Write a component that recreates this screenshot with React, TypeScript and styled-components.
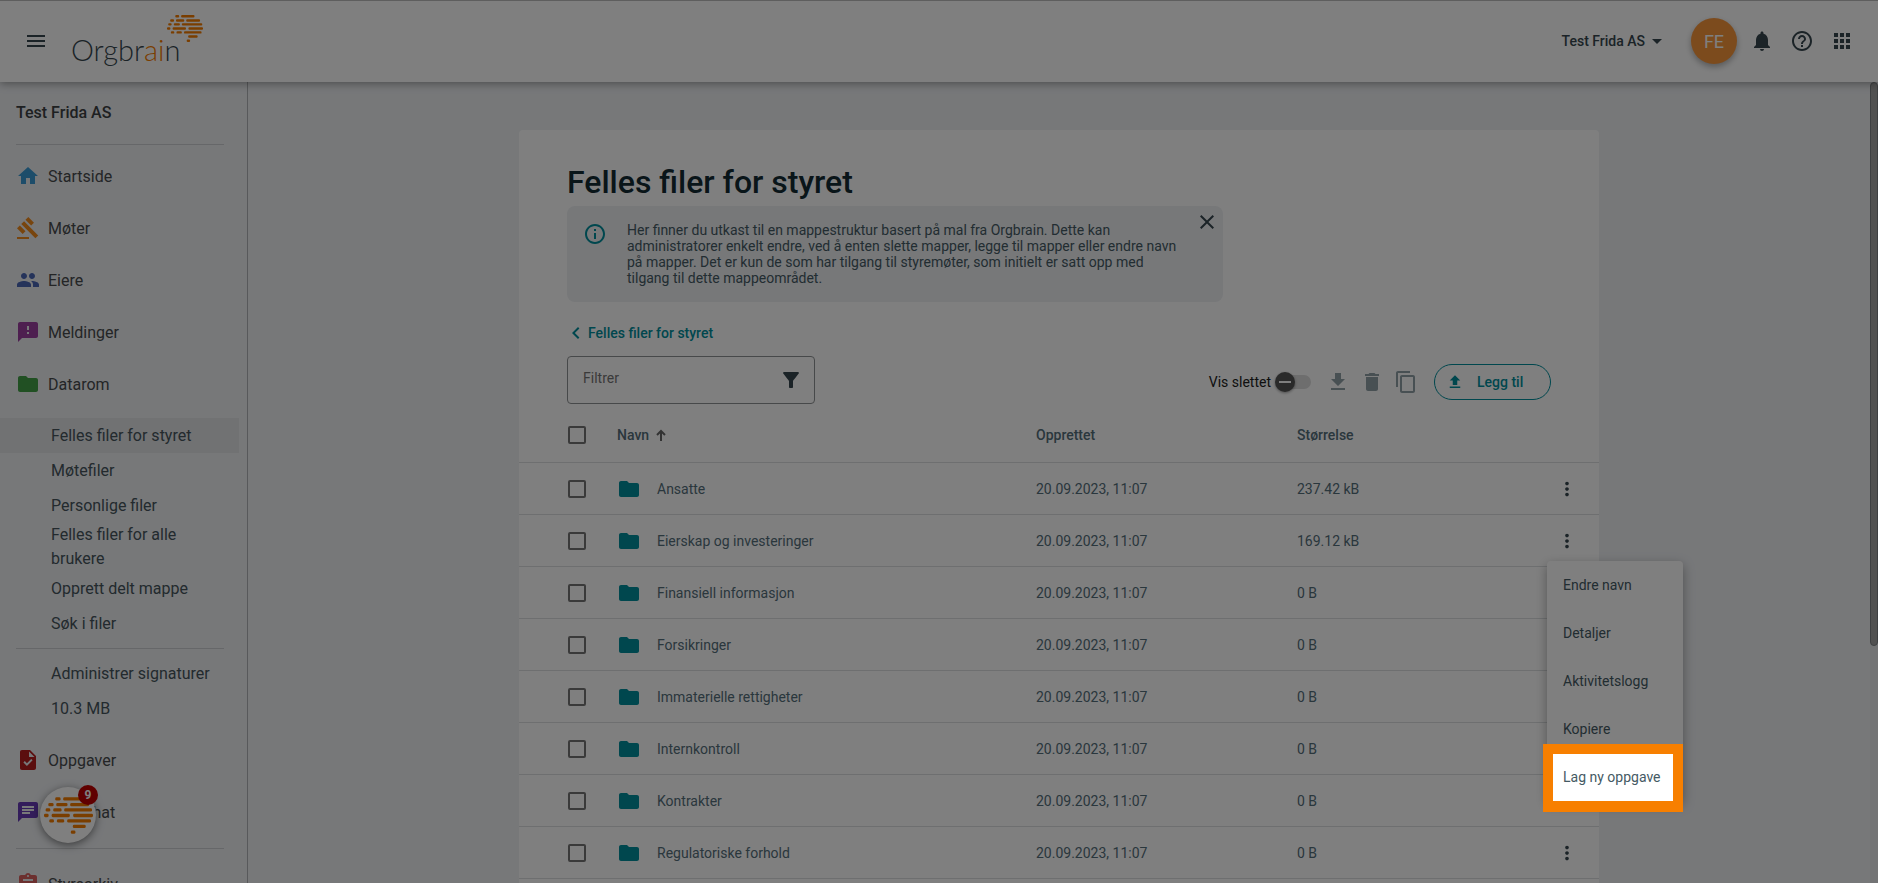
import React from "react";
import styled, { createGlobalStyle } from "styled-components";
import {
  MdMenu, MdHome, MdGavel, MdPeople, MdFeedback, MdFolder, MdTask, MdChat, MdAssignment,
  MdArrowDropDown, MdNotifications, MdHelpOutline, MdApps, MdInfoOutline, MdClose,
  MdChevronLeft, MdFilterAlt, MdFileDownload, MdDelete, MdContentCopy, MdFileUpload,
  MdMoreVert,
} from "react-icons/md";

const teal = "#008e9c";
const slate = "#546e7a";
const ink = "#37474f";
const panel = "#eef0f3";

const GlobalStyle = createGlobalStyle`
  * { box-sizing: border-box; }
  body {
    margin: 0;
    overflow: hidden;
    font-family: Roboto, "Liberation Sans", sans-serif;
    font-size: 14px;
    color: ${slate};
    background: ${panel};
  }
  button, input { font: inherit; color: inherit; }
  a { color: inherit; text-decoration: none; }
  svg { display: block; flex: none; }
`;

const Page = styled.div`
  display: flex;
  flex-direction: column;
  height: 100vh;
`;

const TopBar = styled.header`
  position: relative;
  z-index: 1;
  flex: none;
  display: flex;
  align-items: center;
  height: 82px;
  padding: 0 24px 1px;
  border-top: 1px solid #bdbdbd;
  background: #fff;
  box-shadow: 0 2px 8px rgba(0, 0, 0, 0.35);
`;

const IconButton = styled.button<{ $tone?: string }>`
  display: flex;
  align-items: center;
  justify-content: center;
  padding: 0;
  border: 0;
  background: none;
  color: ${(p) => p.$tone ?? ink};
  cursor: pointer;
`;

const Logo = styled.a`
  position: relative;
  margin-left: 23px;
  width: 132px;
  height: 56px;
  padding-top: 20px;
  font-family: Lato, sans-serif;
  font-weight: 300;
  font-size: 29px;
  line-height: 34px;
  color: #37474f;
`;

const LogoAccent = styled.span`
  color: #f57c00;
`;

const LogoMark = styled.span`
  position: absolute;
  top: 2px;
  right: 0;
`;

const TopActions = styled.div`
  display: flex;
  align-items: center;
  gap: 16px;
  margin-left: auto;
`;

const OrgButton = styled.button`
  display: flex;
  align-items: center;
  margin-right: 6px;
  padding: 0;
  border: 0;
  background: none;
  color: ${ink};
  font-weight: 500;
`;

const Avatar = styled.button`
  width: 46px;
  height: 46px;
  margin-right: -3px;
  padding: 0;
  border: 0;
  border-radius: 50%;
  background: #f9963b;
  color: #fff;
  font-size: 18px;
  box-shadow: 0 3px 6px rgba(0, 0, 0, 0.3);
`;

const Body = styled.div`
  flex: 1;
  display: grid;
  grid-template-columns: 248px 1fr 8px;
  min-height: 0;
`;

const SideBar = styled.nav`
  border-right: 1px solid #b0b3b6;
  padding-right: 8px;
`;

const OrgName = styled.h2`
  margin: 0;
  padding: 19px 16px;
  height: 62px;
  font-size: 16px;
  font-weight: 500;
  line-height: 24px;
  color: #3c4043;
`;

const Rule = styled.hr<{ $above?: number; $below?: number }>`
  height: 1px;
  margin: ${(p) => p.$above ?? 0}px 15px ${(p) => p.$below ?? 0}px 16px;
  border: 0;
  background: #cdcfd2;
`;

const NavItem = styled.a<{ $tone: string }>`
  display: flex;
  align-items: center;
  gap: 8px;
  height: 52px;
  padding-left: 16px;
  font-size: 16px;
  color: #484b4d;
  svg { color: ${(p) => p.$tone}; }
`;

const SubList = styled.div`
  display: flex;
  flex-direction: column;
  padding-top: 8px;
`;

const SubItem = styled.a<{ $active?: boolean }>`
  display: flex;
  align-items: center;
  min-height: 35px;
  padding: 0 16px 0 51px;
  font-size: 16px;
  line-height: 24px;
  color: #46555c;
  background: ${(p) => (p.$active ? "#e2e4e7" : "none")};
`;

const StorageUsed = styled(SubItem)`
  margin-bottom: 8px;
`;

const Main = styled.main`
  display: flex;
  justify-content: center;
  align-items: flex-start;
  padding: 48px 24px 0;
`;

const Card = styled.section`
  width: 100%;
  max-width: 1080px;
  padding-bottom: 48px;
  border-radius: 4px;
  background: #fff;
`;

const CardTop = styled.div`
  padding: 32px 48px 0;
`;

const Title = styled.h1`
  margin: 0;
  font-size: 32px;
  font-weight: 500;
  line-height: 40px;
  color: #122a33;
`;

const Notice = styled.div`
  display: flex;
  align-items: flex-start;
  max-width: 656px;
  margin-top: 4px;
  padding: 16px;
  border-radius: 8px;
  background: ${panel};
`;

const NoticeText = styled.p`
  flex: 1;
  margin: 0 12px 0 20px;
  line-height: 16px;
  color: #455a64;
`;

const NoticeClose = styled(IconButton)`
  margin: -12px -12px 0 0;
`;

const Crumb = styled.a`
  display: flex;
  align-items: center;
  height: 20px;
  margin: 21px 0 13px -3px;
  font-weight: 500;
  color: ${teal};
`;

const Toolbar = styled.div`
  display: flex;
  align-items: center;
  justify-content: space-between;
`;

const FilterBox = styled.label`
  display: flex;
  align-items: center;
  width: 248px;
  height: 48px;
  padding: 0 11px 0 15px;
  border: 1px solid #8e9294;
  border-radius: 4px;
  color: ${ink};
`;

const FilterInput = styled.input`
  flex: 1;
  min-width: 0;
  padding: 0 0 4px;
  border: 0;
  outline: 0;
  background: none;
  &::placeholder { color: #757575; opacity: 1; }
`;

const Tools = styled.div`
  display: flex;
  align-items: center;
  gap: 10px;
  padding-top: 4px;
`;

const SwitchLabel = styled.label`
  display: flex;
  align-items: center;
  gap: 4px;
  margin-right: 5px;
  color: #212121;
`;

const Switch = styled.input`
  appearance: none;
  position: relative;
  width: 36px;
  height: 20px;
  margin: 0;
  &::before {
    content: "";
    position: absolute;
    inset: 3px 0 3px 4px;
    border-radius: 7px;
    background: #dcdcdc;
  }
  &::after {
    content: "";
    position: absolute;
    inset: 0 auto 0 0;
    width: 20px;
    border-radius: 50%;
    background: linear-gradient(#fff, #fff) center / 12px 2px no-repeat #555;
    box-shadow: 0 1px 3px rgba(0, 0, 0, 0.4);
  }
`;

const AddButton = styled.button`
  display: flex;
  align-items: center;
  gap: 13px;
  width: 117px;
  height: 36px;
  margin-left: 6px;
  padding: 0 11px;
  border: 1px solid ${teal};
  border-radius: 18px;
  background: none;
  color: ${teal};
  font-weight: 500;
`;

const Files = styled.table`
  width: 100%;
  border-collapse: separate;
  border-spacing: 0;
  table-layout: fixed;
`;

const HeadCell = styled.th<{ $width?: number; $first?: boolean }>`
  width: ${(p) => (p.$width ? `${p.$width}px` : "auto")};
  height: 59px;
  padding: 4px 0 0 ${(p) => (p.$first ? 49 : 0)}px;
  border-bottom: 1px solid #dcdfe1;
  text-align: left;
  font-weight: 500;
`;

const Cell = styled.td<{ $first?: boolean }>`
  height: 52px;
  padding: 0 0 0 ${(p) => (p.$first ? 49 : 0)}px;
  border-bottom: 1px solid #dcdfe1;
`;

const MenuCell = styled(Cell)`
  position: relative;
  padding-left: 9px;
`;

const SortLabel = styled.span`
  display: flex;
  align-items: center;
  gap: 7px;
`;

const NameLabel = styled.a`
  display: flex;
  align-items: center;
  gap: 16px;
  svg { color: ${teal}; }
`;

const Check = styled.input`
  appearance: none;
  display: block;
  width: 18px;
  height: 18px;
  margin: 0;
  border: 2px solid #757575;
  border-radius: 2px;
`;

const Menu = styled.div`
  position: absolute;
  z-index: 10;
  top: 46px;
  left: 0;
  width: 136px;
  border-radius: 4px;
  background: #fff;
  box-shadow: 0 4px 12px rgba(0, 0, 0, 0.35);
`;

const MenuItem = styled.button`
  position: relative;
  display: flex;
  align-items: center;
  width: 100%;
  height: 48px;
  padding: 0 16px;
  border: 0;
  background: none;
  color: #455a64;
  white-space: nowrap;
`;

/* Frames one item and dims everything outside the frame. */
const Spotlight = styled.span`
  position: absolute;
  inset: -9px 0 -11px -4px;
  border: solid #f77f00;
  border-width: 10px 10px 11px;
  box-shadow: 0 0 0 300vmax rgba(0, 0, 0, 0.5);
  pointer-events: none;
`;

const ScrollTrack = styled.div`
  background: #e6e8eb;
`;

const ScrollThumb = styled.div`
  height: 564px;
  max-height: 71%;
  border: 1px solid #7d8184;
  border-radius: 5px;
  background: #a3a3a3;
`;

const HelpBubble = styled.button`
  position: fixed;
  z-index: 2;
  left: 40px;
  bottom: 40px;
  display: flex;
  align-items: center;
  justify-content: center;
  width: 56px;
  height: 56px;
  padding: 0;
  border: 0;
  border-radius: 50%;
  background: #fff;
  box-shadow: 0 2px 8px rgba(0, 0, 0, 0.5);
`;

const Badge = styled.span`
  position: absolute;
  top: -2px;
  right: -2px;
  width: 20px;
  height: 20px;
  border-radius: 50%;
  background: #c00000;
  color: #fff;
  font-size: 12px;
  font-weight: 700;
  line-height: 20px;
`;

const dashes: [number, number, number][] = [
  [164, 180, 325], [188, 243, 325],
  [143, 159, 342], [167, 201, 342], [209, 266, 342],
  [135, 149, 358], [158, 183, 358], [191, 275, 358],
  [130, 144, 375], [153, 208, 375], [218, 278, 375],
  [146, 160, 391], [169, 191, 391], [200, 272, 391],
  [217, 256, 408], [211, 225, 425],
];

const Brain = ({ width }: { width: number }) => (
  <svg width={width} height={Math.round(width * 0.75)} viewBox="130 320 148 110" aria-hidden="true">
    {dashes.map(([from, to, y]) => (
      <rect key={`${from}-${y}`} x={from} y={y - 5} width={to - from} height={10} rx={4} fill="#f57c00" />
    ))}
  </svg>
);

const SortArrow = () => (
  <svg width={10} height={12} viewBox="0 0 10 12" fill="none" stroke="#666" strokeWidth={2} aria-hidden="true">
    <path d="M5 12V2M1 6l4-4 4 4" />
  </svg>
);

const subItems = [
  "Felles filer for styret", "Møtefiler", "Personlige filer",
  "Felles filer for alle brukere", "Opprett delt mappe", "Søk i filer",
];

const files = [
  ["Ansatte", "237.42 kB"],
  ["Eierskap og investeringer", "169.12 kB"],
  ["Finansiell informasjon", "0 B"],
  ["Forsikringer", "0 B"],
  ["Immaterielle rettigheter", "0 B"],
  ["Internkontroll", "0 B"],
  ["Kontrakter", "0 B"],
  ["Regulatoriske forhold", "0 B"],
];

const RowMenu = () => (
  <Menu role="menu">
    {["Endre navn", "Detaljer", "Aktivitetslogg", "Kopiere"].map((label) => (
      <MenuItem key={label} role="menuitem">{label}</MenuItem>
    ))}
    <MenuItem role="menuitem">
      Lag ny oppgave
      <Spotlight />
    </MenuItem>
  </Menu>
);

export default function App() {
  const openRow = 1;
  return (
    <>
      <GlobalStyle />
      <Page>
        <TopBar>
          <IconButton aria-label="Meny"><MdMenu size={24} /></IconButton>
          <Logo href="#">
            Orgbr<LogoAccent>ai</LogoAccent>n
            <LogoMark><Brain width={36} /></LogoMark>
          </Logo>
          <TopActions>
            <OrgButton>Test Frida AS<MdArrowDropDown size={24} /></OrgButton>
            <Avatar>FE</Avatar>
            <IconButton aria-label="Varsler"><MdNotifications size={24} /></IconButton>
            <IconButton aria-label="Hjelp"><MdHelpOutline size={24} /></IconButton>
            <IconButton aria-label="Apper"><MdApps size={24} /></IconButton>
          </TopActions>
        </TopBar>
        <Body>
          <SideBar>
            <OrgName>Test Frida AS</OrgName>
            <Rule $below={5} />
            <NavItem href="#" $tone="#3a9bd5"><MdHome size={24} />Startside</NavItem>
            <NavItem href="#" $tone="#f08a1c"><MdGavel size={24} />Møter</NavItem>
            <NavItem href="#" $tone="#4a66b5"><MdPeople size={24} />Eiere</NavItem>
            <NavItem href="#" $tone="#9c3fa0"><MdFeedback size={24} />Meldinger</NavItem>
            <NavItem href="#" $tone="#43a047"><MdFolder size={24} />Datarom</NavItem>
            <SubList>
              {subItems.map((label, i) => (
                <SubItem key={label} href="#" $active={i === 0}>{label}</SubItem>
              ))}
            </SubList>
            <Rule $above={7} $below={7} />
            <SubItem href="#">Administrer signaturer</SubItem>
            <StorageUsed as="div">10.3 MB</StorageUsed>
            <NavItem href="#" $tone="#b71c1c"><MdTask size={24} />Oppgaver</NavItem>
            <NavItem href="#" $tone="#673ab7"><MdChat size={24} />Styrechat</NavItem>
            <Rule $above={10} $below={9} />
            <NavItem href="#" $tone="#d9605f"><MdAssignment size={24} />Styrearkiv</NavItem>
          </SideBar>
          <Main>
            <Card>
              <CardTop>
                <Title>Felles filer for styret</Title>
                <Notice>
                  <IconButton as="span" $tone={teal}><MdInfoOutline size={24} /></IconButton>
                  <NoticeText>
                    Her finner du utkast til en mappestruktur basert på mal fra Orgbrain. Dette kan
                    administratorer enkelt endre, ved å enten slette mapper, legge til mapper eller endre navn
                    på mapper. Det er kun de som har tilgang til styremøter, som initielt er satt opp med
                    tilgang til dette mappeområdet.
                  </NoticeText>
                  <NoticeClose aria-label="Lukk"><MdClose size={24} /></NoticeClose>
                </Notice>
                <Crumb href="#"><MdChevronLeft size={24} />Felles filer for styret</Crumb>
                <Toolbar>
                  <FilterBox>
                    <FilterInput placeholder="Filtrer" aria-label="Filtrer" />
                    <MdFilterAlt size={24} />
                  </FilterBox>
                  <Tools>
                    <SwitchLabel>Vis slettet<Switch type="checkbox" role="switch" /></SwitchLabel>
                    <IconButton $tone="#90a0a7" aria-label="Last ned"><MdFileDownload size={24} /></IconButton>
                    <IconButton $tone="#90a0a7" aria-label="Slett"><MdDelete size={24} /></IconButton>
                    <IconButton $tone="#90a0a7" aria-label="Kopier"><MdContentCopy size={24} /></IconButton>
                    <AddButton><MdFileUpload size={18} />Legg til</AddButton>
                  </Tools>
                </Toolbar>
              </CardTop>
              <Files>
                <thead>
                  <tr>
                    <HeadCell $first $width={98}><Check type="checkbox" aria-label="Velg alle" /></HeadCell>
                    <HeadCell><SortLabel>Navn<SortArrow /></SortLabel></HeadCell>
                    <HeadCell $width={261}>Opprettet</HeadCell>
                    <HeadCell $width={250}>Størrelse</HeadCell>
                    <HeadCell $width={52} />
                  </tr>
                </thead>
                <tbody>
                  {files.map(([name, size], i) => (
                    <tr key={name}>
                      <Cell $first><Check type="checkbox" aria-label={name} /></Cell>
                      <Cell><NameLabel href="#"><MdFolder size={24} />{name}</NameLabel></Cell>
                      <Cell>20.09.2023, 11:07</Cell>
                      <Cell>{size}</Cell>
                      <MenuCell>
                        <IconButton aria-label="Valg"><MdMoreVert size={22} /></IconButton>
                        {i === openRow && <RowMenu />}
                      </MenuCell>
                    </tr>
                  ))}
                </tbody>
              </Files>
            </Card>
          </Main>
          <ScrollTrack><ScrollThumb /></ScrollTrack>
        </Body>
        <HelpBubble aria-label="Hjelpesenter">
          <Brain width={49} />
          <Badge>9</Badge>
        </HelpBubble>
      </Page>
    </>
  );
}
